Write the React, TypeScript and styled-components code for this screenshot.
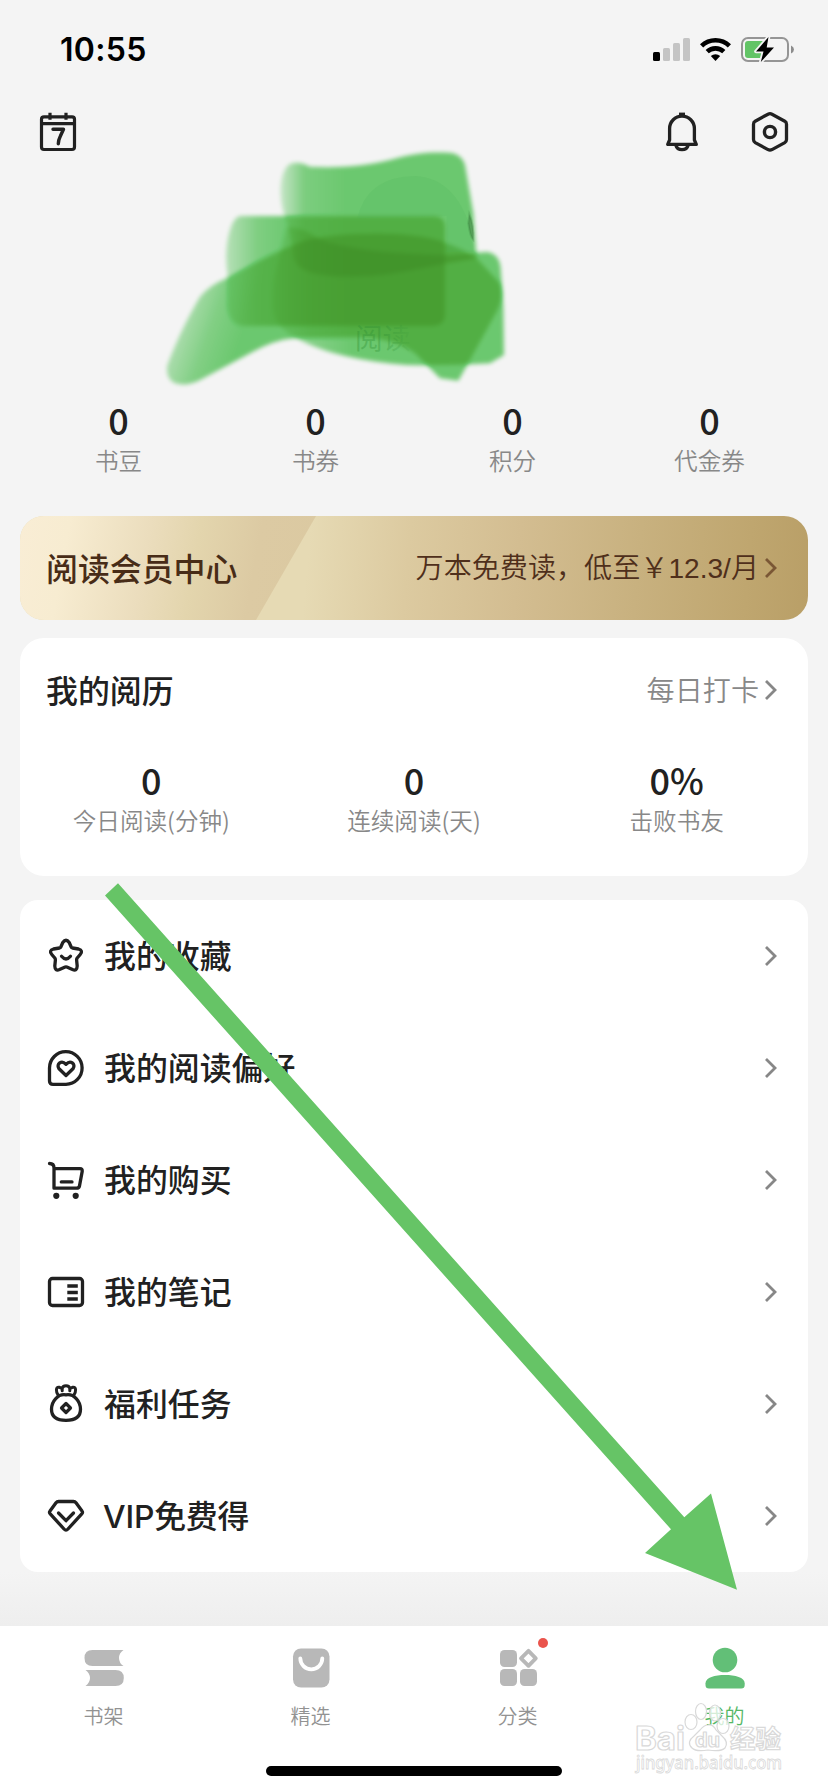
import React from "react";
import styled, { createGlobalStyle } from "styled-components";

const INK = "#212121";
const GREEN = "#66c466";

const GlobalStyle = createGlobalStyle`
  * { box-sizing: border-box; }
  body {
    margin: 0;
    background: #f4f4f4;
    color: ${INK};
    font-family: "Inter", "Noto Sans CJK SC", sans-serif;
  }
  svg { display: block; flex: none; overflow: visible; }
`;

const Screen = styled.div`
  position: relative;
  display: flex;
  flex-direction: column;
  width: 828px;
  height: 1792px;
  overflow: hidden;
  background: #f4f4f4;
`;

const StatusBar = styled.header`
  display: flex;
  align-items: center;
  justify-content: space-between;
  height: 88px;
  padding: 11px 34px 0 60px;
`;

const Clock = styled.time`
  font-size: 32px;
  font-weight: 600;
  line-height: 40px;
  color: #000;
  letter-spacing: 0.3px;
`;

const StatusIcons = styled.div`
  display: flex;
  align-items: center;
  gap: 10px;
`;

const Toolbar = styled.div`
  display: flex;
  align-items: center;
  height: 88px;
  padding: 0 40px;
`;

const ToolbarActions = styled.div`
  display: flex;
  gap: 54px;
  margin-left: auto;
`;

const Profile = styled.section`
  position: relative;
  height: 224px;
`;

const Scribble = styled.svg`
  position: absolute;
  left: 150px;
  top: -36px;
`;

const Assets = styled.section`
  display: grid;
  grid-template-columns: repeat(4, 1fr);
  height: 116px;
  padding: 0 20px;
`;

const Stat = styled.div`
  display: flex;
  flex-direction: column;
  align-items: center;
`;

const StatValue = styled.strong`
  margin-bottom: 4px;
  font-family: "Noto Sans CJK SC", sans-serif;
  font-size: 36px;
  font-weight: 500;
  line-height: 38px;
`;

const StatLabel = styled.span`
  font-family: "Noto Sans CJK SC", sans-serif;
  font-size: 23.6px;
  font-weight: 350;
  line-height: 37px;
  color: #888;
`;

const Banner = styled.section`
  position: relative;
  display: flex;
  align-items: center;
  justify-content: space-between;
  height: 104px;
  margin: 0 20px;
  padding: 0 31px 0 26px;
  border-radius: 24px;
  color: #482c17;
  background: linear-gradient(95deg, #e6dab4 290px, #dccaa0 390px, #d3bd91 500px, #c8b17f 620px, #bfa66f 730px, #b99f67 100%);
  overflow: hidden;

  &::before {
    content: "";
    position: absolute;
    inset: 0 auto 0 0;
    width: 296px;
    background: linear-gradient(100deg, #f9edd5 0, #f7ecd1 50px, #ebddbd 130px, #e3d5ad 180px, #dccaa3 240px, #dbc9a1 100%);
    clip-path: polygon(0 0, 100% 0, 236px 100%, 0 100%);
  }
`;

const Card = styled.section`
  height: 238px;
  margin: 18px 20px 0;
  border-radius: 24px;
  background: #fff;
`;

const CardHeader = styled.div`
  display: flex;
  align-items: center;
  justify-content: space-between;
  height: 104px;
  padding: 0 31px 0 26px;
`;

const Title = styled.h2`
  position: relative;
  margin: 0 0 3px;
  font-family: "Noto Sans CJK SC", sans-serif;
  font-size: 31.9px;
  font-weight: 500;
  line-height: 44px;
`;

const More = styled.a<{ $tone: string }>`
  position: relative;
  display: flex;
  align-items: center;
  gap: 5px;
  font-family: "Noto Sans CJK SC", sans-serif;
  font-size: 28.1px;
  font-weight: 350;
  line-height: 40px;
  color: ${(p) => p.$tone};
`;

const MoreText = styled.span`
  margin-bottom: 2px;
`;

const Price = styled.span`
  font-family: "Liberation Sans", sans-serif;
`;

const ReadingStats = styled.div`
  display: grid;
  grid-template-columns: repeat(3, 1fr);
  padding-top: 18px;
`;

const Menu = styled.nav`
  display: flex;
  flex-direction: column;
  margin: 24px 20px 0;
  border-radius: 18px;
  background: #fff;
`;

const MenuItem = styled.a`
  display: flex;
  align-items: center;
  height: 112px;
  padding: 0 31px 0 26px;
`;

const MenuIcon = styled.svg.attrs({ width: 40, height: 40, viewBox: "0 0 40 40" })`
  fill: none;
  stroke: ${INK};
  stroke-width: 3.3;
  stroke-linecap: round;
  stroke-linejoin: round;
`;

const MenuLabel = styled.span<{ $tight?: boolean }>`
  flex: 1;
  margin: 2px 0 0 ${(p) => (p.$tight ? "17px" : "18px")};
  font-family: "Inter", "Noto Sans CJK SC", sans-serif;
  font-size: 31.9px;
  font-weight: 500;
  line-height: 44px;
  letter-spacing: ${(p) => (p.$tight ? "-0.2px" : "0")};
`;

const TabShade = styled.div`
  height: 54px;
  background: linear-gradient(#f4f4f4, #eeeeee);
`;

const TabBar = styled.footer`
  display: grid;
  grid-template-columns: repeat(4, 1fr);
  height: 140px;
  background: #fff;
`;

const Tab = styled.a<{ $active?: boolean }>`
  position: relative;
  display: flex;
  flex-direction: column;
  align-items: center;
  padding-top: 22px;
  gap: 13px;
  font-family: "Noto Sans CJK SC", sans-serif;
  font-size: 20px;
  font-weight: 350;
  line-height: 30px;
  color: ${(p) => (p.$active ? "#55b866" : "#929292")};
`;

const Dot = styled.i`
  position: absolute;
  left: 123.5px;
  top: 12px;
  width: 10px;
  height: 10px;
  border-radius: 50%;
  background: #ea544c;
`;

const HomeArea = styled.div`
  flex: 1;
  background: #fff;
`;

const HomeIndicator = styled.div`
  width: 296px;
  height: 10px;
  margin: 0 auto;
  border-radius: 5px;
  background: #000;
`;

const Arrow = styled.svg`
  position: absolute;
  left: 100px;
  top: 880px;
`;

const Watermark = styled.div`
  position: absolute;
  left: 635px;
  top: 1700px;
  width: 150px;
  height: 76px;
`;

const Chevron = ({ color = "#878787" }: { color?: string }) => (
  <svg width="13" height="22" viewBox="0 0 13 22" fill="none" stroke={color} strokeWidth="2.8">
    <path d="M2 2 11 11 2 20" />
  </svg>
);

const CalendarIcon = () => (
  <svg width="36" height="40" viewBox="0 0 36 40" fill="none" stroke={INK} strokeWidth="3.2">
    <rect x="1.5" y="4.8" width="33" height="32.7" rx="2.5" />
    <path d="M1.5 11.6h33M10 .8v7M26 .8v7" />
    <path d="M13 17.3h10.5l-3.2 7q-2 4-2 7.4" strokeWidth="3.4" strokeLinecap="round" strokeLinejoin="round" />
  </svg>
);

const BellIcon = () => (
  <svg width="32" height="40" viewBox="0 0 32 40" fill="none" stroke={INK} strokeWidth="3.3">
    <path d="M13 2.4h6" strokeWidth="3.6" />
    <path d="M1.7 32.4h28.6L28.4 28V16.5a12.4 12.4 0 0 0-24.8 0V28Z" strokeLinejoin="round" />
    <path d="M10 33.5q1 4.1 6 4.1t6-4.1" />
  </svg>
);

const HexIcon = () => (
  <svg width="36" height="40" viewBox="0 0 36 40" fill="none" stroke={INK} strokeWidth="3.3">
    <path d="M16 2.2q2-1 4 0l12.8 7q1.7 1 1.7 3v15.4q0 2-1.7 3l-12.8 7q-2 1-4 0l-12.8-7q-1.7-1-1.7-3V12.2q0-2 1.7-3Z" />
    <circle cx="18" cy="20" r="5.6" strokeWidth="3.4" />
  </svg>
);

const SignalIcon = () => (
  <svg width="37" height="25" viewBox="0 0 37 25" fill="#c4c4c4">
    <rect x="0" y="15" width="7" height="9" rx="1.5" fill="#000" />
    <rect x="10" y="11" width="7" height="13" rx="1.5" />
    <rect x="20" y="6" width="7" height="18" rx="1.5" />
    <rect x="30" y="1" width="7" height="23" rx="1.5" />
  </svg>
);

const WifiIcon = () => (
  <svg width="31" height="25" viewBox="0 0 31 25" fill="none" stroke="#000" strokeWidth="4.6">
    <path d="M1.6 8.8a20 20 0 0 1 27.8 0" />
    <path d="M7.2 14.6a12.2 12.2 0 0 1 16.6 0" />
    <path d="M10.8 19a7 7 0 0 1 9.4 0L15.5 24Z" fill="#000" stroke="none" />
  </svg>
);

const BatteryIcon = () => (
  <svg width="53" height="25" viewBox="0 0 53 25">
    <rect x="1" y="1" width="46" height="23" rx="6" fill="none" stroke="#959595" strokeWidth="2" />
    <path d="M50 8.5q3 1.3 3 4t-3 4Z" fill="#8c8c8c" />
    <rect x="4" y="4" width="21" height="17" rx="3" fill="#62c466" />
    <path d="M27.5 0 15 14.5h7.5L19.8 25 33 10.5h-7.3Z" fill="#000" stroke="#f4f4f4" strokeWidth="3.6" paintOrder="stroke" strokeLinejoin="round" />
  </svg>
);

const tableR = "0.424 0.424 0.424 0.424 0.424 0.424 0.424 0.424 0.424 0.4 0.376 0.35 0.325 0.306 0.286 0.263 0.255";
const tableG = "0.788 0.788 0.788 0.788 0.788 0.788 0.788 0.788 0.788 0.765 0.74 0.715 0.69 0.659 0.627 0.588 0.58";
const tableB = "0.439 0.439 0.439 0.439 0.439 0.439 0.439 0.439 0.439 0.397 0.355 0.312 0.27 0.235 0.2 0.172 0.165";

const MarkerScribble = () => (
  <Scribble width="380" height="260" viewBox="0 0 1140 780">
    <defs>
      {/* Stroke opacity accumulates where strokes cross; the table turns that depth into a shade. */}
      <filter id="marker" x="0" y="0" width="1140" height="780" filterUnits="userSpaceOnUse" colorInterpolationFilters="sRGB">
        <feGaussianBlur stdDeviation="7" />
        <feColorMatrix values="0 0 0 1 0  0 0 0 1 0  0 0 0 1 0  0 0 0 1 0" />
        <feComponentTransfer>
          <feFuncR type="table" tableValues={tableR} />
          <feFuncG type="table" tableValues={tableG} />
          <feFuncB type="table" tableValues={tableB} />
          <feFuncA type="table" tableValues="0 0.5 1 1 1" />
        </feComponentTransfer>
      </filter>
      <linearGradient id="fadeA" gradientUnits="userSpaceOnUse" x1="385" y1="0" x2="580" y2="0">
        <stop offset="0" stopOpacity=".14" />
        <stop offset=".4" stopOpacity=".44" />
        <stop offset="1" stopOpacity=".5" />
      </linearGradient>
      <linearGradient id="fadeB" gradientUnits="userSpaceOnUse" x1="225" y1="0" x2="420" y2="0">
        <stop offset="0" stopOpacity=".22" />
        <stop offset=".5" stopOpacity=".43" />
        <stop offset="1" stopOpacity=".5" />
      </linearGradient>
      <linearGradient id="fadeC" gradientUnits="userSpaceOnUse" x1="60" y1="640" x2="230" y2="700">
        <stop offset="0" stopOpacity=".26" />
        <stop offset=".5" stopOpacity=".42" />
        <stop offset="1" stopOpacity=".5" />
      </linearGradient>
      <linearGradient id="fadeD" gradientUnits="userSpaceOnUse" x1="360" y1="0" x2="600" y2="0">
        <stop offset="0" stopOpacity=".14" />
        <stop offset=".5" stopOpacity=".4" />
        <stop offset="1" stopOpacity=".5" />
      </linearGradient>
      <linearGradient id="fadeText" gradientUnits="userSpaceOnUse" x1="614" y1="0" x2="790" y2="0">
        <stop offset="0" stopColor="#2f8f33" stopOpacity=".38" />
        <stop offset=".5" stopColor="#2f8f33" stopOpacity=".34" />
        <stop offset="1" stopColor="#2f8f33" stopOpacity=".06" />
      </linearGradient>
    </defs>
    <g filter="url(#marker)">
      <path fill="url(#fadeA)" d="M400 215C385 160 390 100 415 75Q440 60 480 80C560 84 640 80 720 60C800 36 850 36 895 38Q935 40 945 75L970 220 980 355 880 372C780 390 720 410 600 410Q440 412 430 350Q425 280 400 215Z" />
      <path fill="url(#fadeB)" d="M270 228H850Q885 228 885 263V525Q885 555 850 558H280Q240 555 232 500V400Q222 330 240 270 250 233 270 228Z" />
      <path fill="url(#fadeC)" d="M52 675C80 600 120 520 150 470Q180 435 230 415C310 370 400 325 460 303C560 275 800 270 885 308Q950 330 980 355L1050 430Q1068 460 1040 515L960 660 925 722 870 715 795 640Q740 600 640 592L430 595Q370 600 300 640L150 720Q110 740 75 730 45 715 52 675Z" />
      <path fill="url(#fadeD)" d="M410 262C470 262 480 290 540 308C640 335 760 342 900 345L1010 336Q1048 340 1052 385L1060 500 1062 645 1020 670Q900 678 770 675C640 665 520 640 440 595Q370 560 368 500Q366 430 378 390Z" />
    </g>
    <path d="M622 235Q650 110 795 108 930 115 970 300V335H890V228Z" fill="#4fb257" fillOpacity=".18" />
    <path d="M958 222Q972 255 970 300 960 290 955 250Z" fill="#387b3c" fillOpacity=".5" stroke="#387b3c" strokeOpacity=".25" strokeWidth="6" />
    <text x="614" y="628" fontSize="84" fontFamily="Noto Sans CJK SC, sans-serif" fill="url(#fadeText)">阅读</text>
  </Scribble>
);

const menuItems: { label: string; tight?: boolean; icon: React.ReactNode }[] = [
  {
    label: "我的收藏",
    icon: <><path d="M16.8 6.5Q20 2 23.2 6.5L25.2 11Q25.6 11.8 26.5 12L32.5 13Q37.5 14.5 34.2 18.5L31.2 22Q30.5 23 30.6 24L31.2 30Q31 35.5 26.5 33.6L20.8 31Q20 30.7 19.2 31L13.5 33.6Q9 35.5 8.8 30L9.4 24Q9.5 23 8.8 22L5.8 18.5Q2.5 14.5 7.5 13L13.5 12Q14.4 11.8 14.8 11Z" /><path d="M15.5 20.3q4.5 5.4 9 0" /></>,
  },
  {
    label: "我的阅读偏好",
    icon: <><path d="M3.5 20A16.3 16.3 0 1 1 20 36.3H7Q3.5 36.3 3.5 33Z" /><path d="M20 27.5 12.8 20.5C10 16 15.5 11.5 20 16.3C24.5 11.5 30 16 27.2 20.5Z" /></>,
  },
  {
    label: "我的购买",
    icon: <><path d="M3.5 3.5Q8 3.5 8 8V28.2H30.5Q33 28.2 33.5 25.8L36.2 11.4Q36.6 8.7 34 8.7H8" /><path d="M15.3 21.9H26" /><circle cx="10.3" cy="35.8" r="3.1" fill={INK} stroke="none" /><circle cx="29.7" cy="35.8" r="3.1" fill={INK} stroke="none" /></>,
  },
  {
    label: "我的笔记",
    icon: <><rect x="3.5" y="6.5" width="33" height="27" rx="3" /><path d="M21.3 14H31.8M21.3 20.5H31.8M21.3 27H31.8" strokeLinecap="butt" /></>,
  },
  {
    label: "福利任务",
    icon: <><path d="M20 10.8C28 9.3 34.5 17.5 34.5 25.3C34.5 33.5 28 36.4 20 36.4S5.5 33.5 5.5 25.3C5.5 17.5 12 9.3 20 10.8Z" /><path d="M12.3 11.4C9.7 8 9.7 2.8 13 3.2L16.2 4.6C16.8 .8 23.2 .8 23.8 4.6L27 3.2C30.3 2.8 30.3 8 27.7 11.4M16.2 4.6V6.8M23.8 4.6V6.8" strokeWidth="3" /><path d="M20 19.5 24.5 24 20 28.5 15.5 24Z" strokeWidth="3.2" /></>,
  },
  {
    label: "VIP免费得",
    tight: true,
    icon: <><path d="M12.5 5.5H27.5Q29 5.5 30 6.8L36 15Q37 16.3 36 17.6L22 33Q20 35.2 18 33L4 17.6Q3 16.3 4 15L10 6.8Q11 5.5 12.5 5.5Z" /><path d="M12.5 17 20 24.7 27.5 17" /></>,
  },
];

const shelfIcon = (
  <svg width="40" height="40" viewBox="0 0 40 40" fill="#b8b8b8">
    <path d="M8.5 2H39.5Q35 5 35 10T39.5 18H8.5Q.5 18 .5 10T8.5 2Z" />
    <path d="M1.5 22H31.5Q39.8 22 39.8 30T31.5 38H1.5Q6 34.5 6 30T1.5 22Z" />
  </svg>
);

const bagIcon = (
  <svg width="40" height="40" viewBox="0 0 40 40">
    <rect x="2" y=".5" width="36.5" height="39" rx="8" fill="#b8b8b8" />
    <path d="M9.3 10.3a11 11 0 0 0 22 0" fill="none" stroke="#fff" strokeWidth="3.8" strokeLinecap="round" />
  </svg>
);

const gridIcon = (
  <svg width="40" height="40" viewBox="0 0 40 40" fill="#b8b8b8">
    <rect x="2" y="2" width="17" height="17" rx="4.5" />
    <rect x="2" y="21" width="17" height="17" rx="4.5" />
    <rect x="22" y="21" width="17" height="17" rx="4.5" />
    <path d="M30.5 2.8 37.8 10.3 30.5 17.8 23 10.3Z" fill="none" stroke="#b8b8b8" strokeWidth="3.8" strokeLinejoin="round" />
  </svg>
);

const personIcon = (
  <svg width="40" height="40" viewBox="0 0 40 40" fill="#62bf77">
    <circle cx="20" cy="12" r="12.3" />
    <path d="M.5 35.3C.5 29.5 10 27 20 27s19.7 2.5 19.7 8.3V37q0 3.5-3.5 3.5H4Q.5 40.5.5 37Z" />
  </svg>
);

const tabs = [
  { label: "书架", icon: shelfIcon },
  { label: "精选", icon: bagIcon },
  { label: "分类", icon: gridIcon, dot: true },
  { label: "我的", icon: personIcon, active: true },
];

const assets = ["书豆", "书券", "积分", "代金券"];
const reading = [
  ["0", "今日阅读(分钟)"],
  ["0", "连续阅读(天)"],
  ["0%", "击败书友"],
];

const WatermarkMark = () => (
  <Watermark>
    <svg width="150" height="76" viewBox="0 0 150 76" fill="#fff" stroke="#d9d9d9" strokeWidth="1.2">
      <g fillOpacity=".75">
        <ellipse cx="56" cy="22" rx="6" ry="7.5" />
        <ellipse cx="66" cy="11.5" rx="5.5" ry="8" />
        <ellipse cx="80" cy="13" rx="5.5" ry="8" />
        <ellipse cx="88" cy="26" rx="6" ry="7.5" />
      </g>
      <path d="M73 25Q78 24 81 30L87 36Q94 42 90 48 86 52 73 50 61 52 57 48 51 42 59 36L65 30Q69 25 73 25Z" />
      <g fontFamily="Inter, sans-serif" fontWeight="700" strokeLinejoin="round">
        <text x="0" y="49.5" fontSize="33" textLength="50" lengthAdjust="spacingAndGlyphs">Bai</text>
        <text x="60" y="47" fontSize="20" textLength="25" lengthAdjust="spacingAndGlyphs">du</text>
      </g>
      <text x="95" y="48" fontSize="25.5" fontWeight="700" fontFamily="Noto Sans CJK SC, sans-serif">经验</text>
      <text x="1" y="69" fontSize="17.5" textLength="146" lengthAdjust="spacingAndGlyphs" strokeWidth=".8" fontWeight="500" fontFamily="Noto Sans, sans-serif">jingyan.baidu.com</text>
    </svg>
  </Watermark>
);

export default function App() {
  return (
    <>
      <GlobalStyle />
      <Screen>
        <StatusBar>
          <Clock>10:55</Clock>
          <StatusIcons>
            <SignalIcon />
            <WifiIcon />
            <BatteryIcon />
          </StatusIcons>
        </StatusBar>
        <Toolbar>
          <CalendarIcon />
          <ToolbarActions>
            <BellIcon />
            <HexIcon />
          </ToolbarActions>
        </Toolbar>
        <Profile>
          <MarkerScribble />
        </Profile>
        <Assets>
          {assets.map((label) => (
            <Stat key={label}>
              <StatValue>0</StatValue>
              <StatLabel>{label}</StatLabel>
            </Stat>
          ))}
        </Assets>
        <Banner>
          <Title>阅读会员中心</Title>
          <More $tone="#4f2f1b">
            <MoreText>万本免费读，低至￥<Price>12.3/</Price>月</MoreText>
            <Chevron color="#7a5735" />
          </More>
        </Banner>
        <Card>
          <CardHeader>
            <Title>我的阅历</Title>
            <More $tone="#888">
              <MoreText>每日打卡</MoreText>
              <Chevron />
            </More>
          </CardHeader>
          <ReadingStats>
            {reading.map(([value, label]) => (
              <Stat key={label}>
                <StatValue>{value}</StatValue>
                <StatLabel>{label}</StatLabel>
              </Stat>
            ))}
          </ReadingStats>
        </Card>
        <Menu>
          {menuItems.map(({ label, tight, icon }) => (
            <MenuItem key={label}>
              <MenuIcon>{icon}</MenuIcon>
              <MenuLabel $tight={tight}>{label}</MenuLabel>
              <Chevron />
            </MenuItem>
          ))}
        </Menu>
        <TabShade />
        <TabBar>
          {tabs.map(({ label, icon, dot, active }) => (
            <Tab key={label} $active={active}>
              {icon}
              {label}
              {dot && <Dot />}
            </Tab>
          ))}
        </TabBar>
        <HomeArea>
          <HomeIndicator />
        </HomeArea>
        <Arrow width="640" height="712" viewBox="100 880 640 712">
          <path fill={GREEN} d="M118 883.3 684.3 1517.3 711 1493.5 737 1589.7 645 1553 671 1529.3 105 895.5Z" />
        </Arrow>
        <WatermarkMark />
      </Screen>
    </>
  );
}
